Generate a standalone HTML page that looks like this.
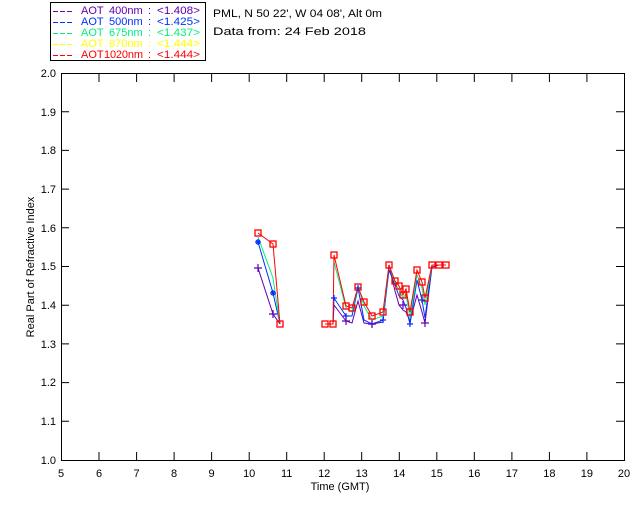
<!DOCTYPE html>
<html><head><style>
body{margin:0;background:#fff;width:640px;height:512px;overflow:hidden}
svg text{font-family:"Liberation Sans",sans-serif;font-size:11px}
</style></head><body>
<svg width="640" height="512" xmlns="http://www.w3.org/2000/svg">
<rect x="50.5" y="2.5" width="155" height="58" fill="#fff" stroke="#000"/>
<g stroke-width="1">
<path d="M53 11.5h20" stroke="#6000b0" stroke-dasharray="5 2"/>
<path d="M53 22.5h20" stroke="#0030ff" stroke-dasharray="5 2"/>
<path d="M53 33.5h20" stroke="#00f080" stroke-dasharray="5 2"/>
<path d="M53 44.5h20" stroke="#ffff00" stroke-dasharray="5 2"/>
<path d="M53 55.5h20" stroke="#ff0000" stroke-dasharray="5 2"/>
</g>
<g font-size="11">
<g fill="#6000b0"><text x="81" y="14">AOT</text><text x="109" y="14">400nm</text><text x="148" y="14">:</text><text x="157" y="14" textLength="43" lengthAdjust="spacingAndGlyphs">&lt;1.408&gt;</text></g>
<g fill="#0030ff"><text x="81" y="25">AOT</text><text x="109" y="25">500nm</text><text x="148" y="25">:</text><text x="157" y="25" textLength="43" lengthAdjust="spacingAndGlyphs">&lt;1.425&gt;</text></g>
<g fill="#00f080"><text x="81" y="36">AOT</text><text x="109" y="36">675nm</text><text x="148" y="36">:</text><text x="157" y="36" textLength="43" lengthAdjust="spacingAndGlyphs">&lt;1.437&gt;</text></g>
<g fill="#ffff00"><text x="81" y="47">AOT</text><text x="109" y="47">870nm</text><text x="148" y="47">:</text><text x="157" y="47" textLength="43" lengthAdjust="spacingAndGlyphs">&lt;1.444&gt;</text></g>
<g fill="#ff0000"><text x="81" y="58">AOT</text><text x="104" y="58" textLength="39">1020nm</text><text x="148" y="58">:</text><text x="157" y="58" textLength="43" lengthAdjust="spacingAndGlyphs">&lt;1.444&gt;</text></g>
<text x="213" y="17" fill="#000" textLength="169" lengthAdjust="spacingAndGlyphs">PML, N 50 22', W 04 08', Alt 0m</text>
<text x="213" y="35" fill="#000" textLength="153" lengthAdjust="spacingAndGlyphs">Data from: 24 Feb 2018</text>
</g>
<rect x="61.5" y="73.5" width="563" height="387" fill="none" stroke="#000"/>
<g stroke="#000">
<path d="M99 460v-8M136.6 460v-8M174.1 460v-8M211.6 460v-8M249.2 460v-8M286.7 460v-8M324.2 460v-8M361.7 460v-8M399.3 460v-8M436.8 460v-8M474.3 460v-8M511.9 460v-8M549.4 460v-8M586.9 460v-8
M99 74v8M136.6 74v8M174.1 74v8M211.6 74v8M249.2 74v8M286.7 74v8M324.2 74v8M361.7 74v8M399.3 74v8M436.8 74v8M474.3 74v8M511.9 74v8M549.4 74v8M586.9 74v8
M61 421.3h8M61 382.6h8M61 343.9h8M61 305.2h8M61 266.5h8M61 227.8h8M61 189.1h8M61 150.4h8M61 111.7h8
M624 421.3h-8M624 382.6h-8M624 343.9h-8M624 305.2h-8M624 266.5h-8M624 227.8h-8M624 189.1h-8M624 150.4h-8M624 111.7h-8"/>
</g>
<g fill="#000" text-anchor="end">
<text x="56" y="464">1.0</text><text x="56" y="425">1.1</text><text x="56" y="386">1.2</text><text x="56" y="348">1.3</text><text x="56" y="309">1.4</text><text x="56" y="270">1.5</text><text x="56" y="232">1.6</text><text x="56" y="193">1.7</text><text x="56" y="154">1.8</text><text x="56" y="116">1.9</text><text x="56" y="77">2.0</text>
</g>
<g fill="#000" text-anchor="middle">
<text x="61" y="477">5</text><text x="99" y="477">6</text><text x="136.6" y="477">7</text><text x="174.1" y="477">8</text><text x="211.6" y="477">9</text><text x="249.2" y="477">10</text><text x="286.7" y="477">11</text><text x="324.2" y="477">12</text><text x="361.7" y="477">13</text><text x="399.3" y="477">14</text><text x="436.8" y="477">15</text><text x="474.3" y="477">16</text><text x="511.9" y="477">17</text><text x="549.4" y="477">18</text><text x="586.9" y="477">19</text><text x="624" y="477">20</text>
<text x="340" y="490">Time (GMT)</text>
</g>
<text transform="translate(34 267) rotate(-90)" text-anchor="middle" fill="#000">Real Part of Refractive Index</text>
<g fill="none" stroke-width="1">
<polyline stroke="#6000b0" points="258,268 273,314 280,324"/>
<polyline stroke="#6000b0" points="325,324 333,324 334,305 346,321 352,323 358,301 364,323 372,324 383,322 389,265 395,291 399,305 403,310 406,312 410,321 417,295 422,312 425,323 432,267 439,265 446,265"/>
<polyline stroke="#0030ff" points="258,242 273,293 280,324"/>
<polyline stroke="#0030ff" points="325,324 333,324 334,298 346,316 352,316 358,288 364,320 372,324 383,320 389,270 395,285 399,296 403,300 406,308 410,324 417,280 422,300 425,318 432,265 439,265 446,265"/>
<polyline stroke="#00f080" points="258,237 273,278 280,324"/>
<polyline stroke="#00f080" points="334,262 346,308 352,312 358,286 364,306 372,320 383,316 389,265 395,283 399,290 403,298 406,294 410,318 417,275 422,288 425,305 432,265"/>
<polyline stroke="#ff0000" points="258,233 273,244 280,324"/>
<polyline stroke="#ff0000" points="325,324 333,324 334,255 346,306 352,308 358,287 364,302 372,316 383,312 389,265 395,281 399,286 403,295 406,289 410,312 417,270 422,282 425,298 432,265 439,265 446,265"/>
</g>
<g fill="none" stroke="#ff0000" stroke-width="1.3">
<rect x="255" y="230" width="6" height="6"/><rect x="270" y="241" width="6" height="6"/><rect x="277" y="321" width="6" height="6"/><rect x="322" y="321" width="6" height="6"/><rect x="330" y="321" width="6" height="6"/><rect x="331" y="252" width="6" height="6"/><rect x="343" y="303" width="6" height="6"/><rect x="349" y="305" width="6" height="6"/><rect x="355" y="284" width="6" height="6"/><rect x="361" y="299" width="6" height="6"/><rect x="369" y="313" width="6" height="6"/><rect x="380" y="309" width="6" height="6"/><rect x="386" y="262" width="6" height="6"/><rect x="392" y="278" width="6" height="6"/><rect x="396" y="283" width="6" height="6"/><rect x="400" y="292" width="6" height="6"/><rect x="403" y="286" width="6" height="6"/><rect x="407" y="309" width="6" height="6"/><rect x="414" y="267" width="6" height="6"/><rect x="419" y="279" width="6" height="6"/><rect x="422" y="295" width="6" height="6"/><rect x="429" y="262" width="6" height="6"/><rect x="436" y="262" width="6" height="6"/><rect x="443" y="262" width="6" height="6"/>
</g>
<g stroke="#0030ff" stroke-width="1.2">
<path d="M255 242h6M258 239v6M256 240l4 4M260 240l-4 4 M270 293h6M273 290v6M271 291l4 4M275 291l-4 4 M331 298h6M334 295v6 M343 316h6M346 313v6 M355 288h6M358 285v6 M369 324h6M372 321v6 M380 320h6M383 317v6 M407 324h6M410 321v6 M419 300h6M422 297v6"/>
</g>
<g stroke="#6000b0" stroke-width="1.2">
<path d="M254 268h8M258 264v8 M269 314h8M273 310v8 M342 321h8M346 317v8 M368 324h8M372 320v8 M421 323h8M425 319v8 M399 305h8M403 301v8"/>
</g>
</svg>
</body></html>
